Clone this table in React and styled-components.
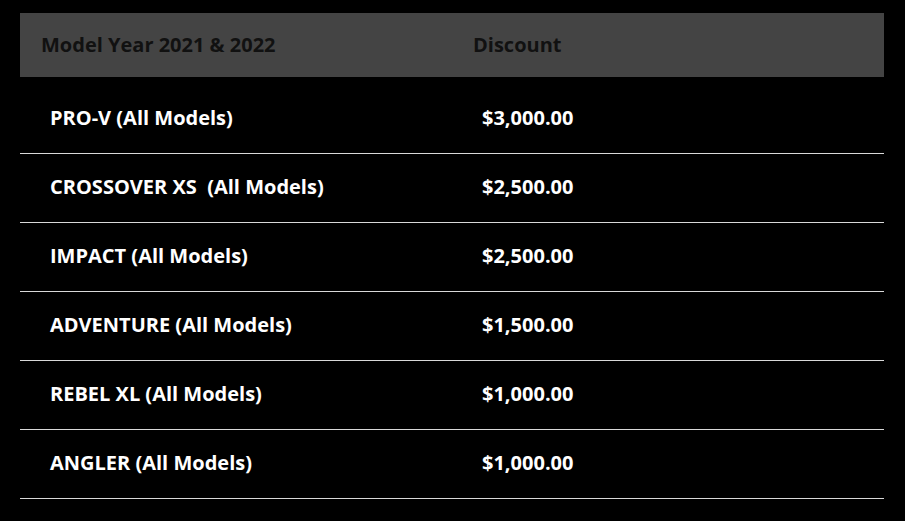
import React from "react";
import styled, { createGlobalStyle } from "styled-components";

const GlobalStyle = createGlobalStyle`
  body {
    margin: 0;
    background: #000;
    font-family: "Open Sans", "Liberation Sans", sans-serif;
  }
`;

const Page = styled.div`
  padding: 13px 21px 0 20px;
  background: #000;
  min-height: 521px;
  box-sizing: border-box;
`;

const Table = styled.div`
  display: flex;
  flex-direction: column;
`;

const HeadRow = styled.div`
  display: grid;
  grid-template-columns: 432px 1fr;
  height: 64px;
  align-items: center;
  background: #444444;
  margin-bottom: 8px;
`;

const HeadCell = styled.div`
  padding-left: 21px;
  padding-bottom: 2px;
  color: #111;
  font-size: 20px;
  font-weight: 700;
`;

const Row = styled.div`
  display: grid;
  grid-template-columns: 432px 1fr;
  height: 68px;
  align-items: center;
  border-bottom: 1px solid #d9d9d9;
`;

const Cell = styled.div`
  padding-left: 30px;
  padding-bottom: 3px;
  color: #fff;
  font-size: 20px;
  font-weight: 700;
  white-space: pre;
`;

const rows = [
  ["PRO-V (All Models)", "$3,000.00"],
  ["CROSSOVER XS  (All Models)", "$2,500.00"],
  ["IMPACT (All Models)", "$2,500.00"],
  ["ADVENTURE (All Models)", "$1,500.00"],
  ["REBEL XL (All Models)", "$1,000.00"],
  ["ANGLER (All Models)", "$1,000.00"],
];

const App = () => {
  return (
    <Page>
      <GlobalStyle />
      <Table>
        <HeadRow>
          <HeadCell>Model Year 2021 &amp; 2022</HeadCell>
          <HeadCell>Discount</HeadCell>
        </HeadRow>
        {rows.map(([model, discount]) => (
          <Row key={model}>
            <Cell>{model}</Cell>
            <Cell>{discount}</Cell>
          </Row>
        ))}
      </Table>
    </Page>
  );
};

export default App;
